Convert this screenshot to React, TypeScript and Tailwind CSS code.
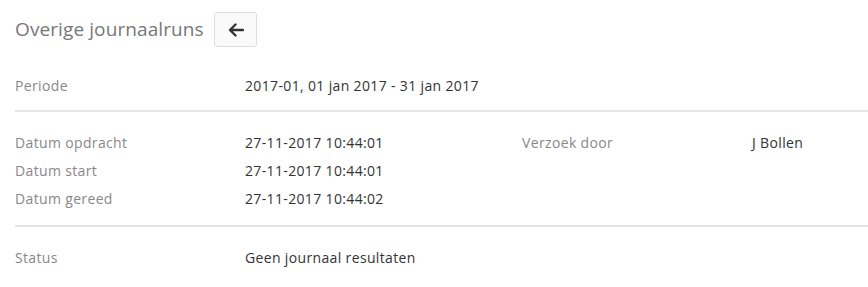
import React from 'react';

const Row = ({ label, value, label2, value2 }: { label: string; value: string; label2?: string; value2?: string }) => (
  <div className="flex h-[28px] items-center text-[14px] tracking-[0.35px]">
    <div className="w-[230px] text-[#888]">{label}</div>
    <div className="w-[277px] text-[#333]">{value}</div>
    {label2 && <div className="w-[230px] text-[#888]">{label2}</div>}
    {value2 && <div className="text-[#333]">{value2}</div>}
  </div>
);

export default function App() {
  return (
    <div className="bg-white w-[868px] h-[287px] pl-[15px] pt-[12px]" style={{ fontFamily: '"Open Sans", sans-serif' }}>
      {/* Header */}
      <div className="flex items-center h-[35px]">
        <h1 className="w-[188px] text-[19px] tracking-[0.1px] text-[#777] font-normal whitespace-nowrap">Overige journaalruns</h1>
        <button className="ml-[11px] w-[43px] h-[35px] flex items-center justify-center border border-[#ddd] rounded-[3px] bg-[#fafafa]">
          <svg width="16" height="14" viewBox="0 0 16 14" fill="none">
            <path d="M15 7H2.5M7.5 1.5L2 7l5.5 5.5" stroke="#333" strokeWidth="2.4" strokeLinecap="round" strokeLinejoin="round" />
          </svg>
        </button>
      </div>

      {/* Periode */}
      <div className="mt-[24px]">
        <Row label="Periode" value="2017-01, 01 jan 2017 - 31 jan 2017" />
      </div>
      <div className="mt-[11px] h-[2px] bg-[#e5e5e5]" />

      {/* Datums */}
      <div className="pt-[16px] pb-[13px]">
        <Row label="Datum opdracht" value="27-11-2017 10:44:01" label2="Verzoek door" value2="J Bollen" />
        <Row label="Datum start" value="27-11-2017 10:44:01" />
        <Row label="Datum gereed" value="27-11-2017 10:44:02" />
      </div>
      <div className="h-[2px] bg-[#e5e5e5]" />

      {/* Status */}
      <div className="pt-[16px]">
        <Row label="Status" value="Geen journaal resultaten" />
      </div>
    </div>
  );
}
